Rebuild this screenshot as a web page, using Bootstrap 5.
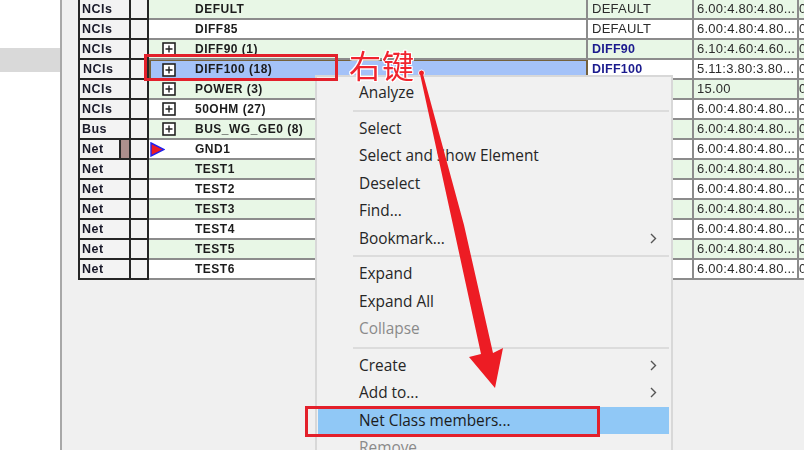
<!DOCTYPE html>
<html lang="en">
<head>
<meta charset="utf-8">
<title>Net classes</title>
<link href="https://cdn.jsdelivr.net/npm/bootstrap@5.3.0/dist/css/bootstrap.min.css" rel="stylesheet">
<style>
html,body{height:100%;}
body{background:#f0f0f0;overflow:hidden;font-family:"Liberation Sans",Arial,sans-serif;}
.stage{position:relative;width:804px;height:450px;overflow:hidden;filter:blur(.35px);}
.side-pane{width:60px;height:100%;background:#fff;border-right:2px solid #a8a8a8;box-sizing:content-box;padding-top:48px;}
.side-band{height:24px;background:#d9d9d9;}
.gutter-strip{width:16px;flex:none;}
.grid-holder{width:726px;flex:none;overflow:hidden;}
.net-grid{table-layout:fixed;width:730px;margin:0;border-collapse:separate;border-spacing:0;--bs-table-bg:transparent;}
.net-grid td{height:20px;padding:0;border:0;border-right:2px solid #8c8c8c;border-bottom:2px solid #8c8c8c;font-size:13px;line-height:18px;color:#2c2c2c;white-space:nowrap;overflow:hidden;letter-spacing:.25px;vertical-align:middle;background:#fff;box-shadow:none;}
.net-grid tr.tint td{background:#e8f7e6;}
.net-grid td.rh{background:#f3f3f3;border-right:2px solid #262626;border-bottom:2px solid #262626;font-weight:700;font-size:12.5px;color:#1a1a2a;padding-left:2px;letter-spacing:.45px;}
.net-grid td.rh-a{border-left:2px solid #262626;}
.net-grid tr td.rh{background:#f3f3f3;}
.net-grid td.tree{font-weight:700;font-size:12px;letter-spacing:.5px;color:#1c1c1c;}
.net-grid td.c4,.net-grid td.c5{padding-left:3px;}
.net-grid td.c4{padding-left:4px;}
.net-grid td.strong{font-weight:700;color:#1b1b8e;font-size:12.5px;}
.net-grid tr.sel td.tree{background:#a4c2f8;border:2px solid #75613c;border-top-width:1px;border-bottom-color:#75613c;line-height:17px;}
.net-grid tr.sel td.rh-a{padding-left:3px;}
.tree-slot{width:46px;flex:none;display:flex;align-items:center;padding-left:13px;}
.sel .tree-slot{width:44px;padding-left:11px;}
.tri-slot{padding-left:1px;}
.expander{display:block;width:14px;height:14px;}
.mark-hdr{display:flex;align-items:stretch;height:100%;}
.hdr-net{flex:1;padding-left:2px;border-right:2px solid #262626;}
.hdr-size{width:8px;background:#ad8f8d;}
td.rh.split{padding-left:0;}
.ctx-menu{display:block;position:absolute;left:315px;top:75px;width:358px;height:390px;margin:0;padding:2px 2px 0 1px;background:#f1f1f1;border:2px solid #d8d8d8;border-radius:0;font-family:"Open Sans","Noto Sans",sans-serif;font-size:15.4px;--bs-dropdown-divider-margin-y:0;}
.ctx-menu .dropdown-item{display:flex;align-items:center;justify-content:space-between;height:27.5px;padding:0 12px 0 41px;color:#262626;background:transparent;font-size:15.4px;line-height:27px;}
.ctx-menu .dropdown-item.active{background:#90c8f6;color:#1c1c1c;}
.ctx-menu .dropdown-item.disabled{color:#8a8a8a;}
.ctx-menu .dropdown-divider{margin:3px 0 3px 35px;border-top:2px solid #dcdcdc;opacity:1;height:0;}
.ctx-menu .dropdown-divider.wide-gap{margin:4px 0 3px 35px;}
.chev{width:7px;height:11px;display:block;}
.note-box{position:absolute;z-index:1001;border:3px solid #e3202b;pointer-events:none;}
.note-a{left:144px;top:54px;width:194px;height:27px;}
.note-b{left:305px;top:406px;width:295px;height:31px;}
.note-text{position:absolute;z-index:1001;left:349px;top:43px;font-family:"Noto Sans CJK SC",sans-serif;font-size:32px;font-weight:400;line-height:42px;color:#f0242e;letter-spacing:1px;text-shadow:1px 0 #fff,-1px 0 #fff,0 1px #fff,0 -1px #fff,1px 1px #fff,-1px -1px #fff,1px -1px #fff,-1px 1px #fff;}
.note-arrow{position:absolute;z-index:1001;left:0;top:0;width:804px;height:450px;pointer-events:none;}
</style>
</head>
<body>
<div class="stage d-flex">
  <div class="side-pane flex-none"><div class="side-band"></div></div>
  <div class="gutter-strip"></div>
  <div class="grid-holder">
    <table class="table net-grid">
      <colgroup><col style="width:53px"><col style="width:18px"><col style="width:439px"><col style="width:106px"><col style="width:105px"><col style="width:9px"></colgroup>
      <tbody>
        <tr class="tint"><td class="rh rh-a">NCIs</td><td class="rh"></td><td class="tree"><div class="d-flex"><span class="tree-slot"></span>DEFULT</div></td><td class="c4">DEFAULT</td><td class="c5">6.00:4.80:4.80...</td><td>0</td></tr>
        <tr><td class="rh rh-a">NCIs</td><td class="rh"></td><td class="tree"><div class="d-flex"><span class="tree-slot"></span>DIFF85</div></td><td class="c4">DEFAULT</td><td class="c5">6.00:4.80:4.80...</td><td>0</td></tr>
        <tr class="tint"><td class="rh rh-a">NCIs</td><td class="rh"></td><td class="tree"><div class="d-flex"><span class="tree-slot"><svg class="expander" viewBox="0 0 14 14"><rect x="1" y="1" width="12" height="12" fill="#fff" stroke="#222" stroke-width="1.6"/><path d="M3.5 7h7M7 3.5v7" stroke="#222" stroke-width="1.4"/></svg></span>DIFF90 (1)</div></td><td class="c4 strong">DIFF90</td><td class="c5">6.10:4.60:4.60...</td><td>0</td></tr>
        <tr class="sel"><td class="rh rh-a">NCIs</td><td class="rh"></td><td class="tree"><div class="d-flex"><span class="tree-slot"><svg class="expander" viewBox="0 0 14 14"><rect x="1" y="1" width="12" height="12" fill="#fff" stroke="#222" stroke-width="1.6"/><path d="M3.5 7h7M7 3.5v7" stroke="#222" stroke-width="1.4"/></svg></span>DIFF100 (18)</div></td><td class="c4 strong">DIFF100</td><td class="c5">5.11:3.80:3.80...</td><td>0</td></tr>
        <tr class="tint"><td class="rh rh-a">NCIs</td><td class="rh"></td><td class="tree"><div class="d-flex"><span class="tree-slot"><svg class="expander" viewBox="0 0 14 14"><rect x="1" y="1" width="12" height="12" fill="#fff" stroke="#222" stroke-width="1.6"/><path d="M3.5 7h7M7 3.5v7" stroke="#222" stroke-width="1.4"/></svg></span>POWER (3)</div></td><td class="c4"></td><td class="c5">15.00</td><td>0</td></tr>
        <tr><td class="rh rh-a">NCIs</td><td class="rh"></td><td class="tree"><div class="d-flex"><span class="tree-slot"><svg class="expander" viewBox="0 0 14 14"><rect x="1" y="1" width="12" height="12" fill="#fff" stroke="#222" stroke-width="1.6"/><path d="M3.5 7h7M7 3.5v7" stroke="#222" stroke-width="1.4"/></svg></span>50OHM (27)</div></td><td class="c4"></td><td class="c5">6.00:4.80:4.80...</td><td>0</td></tr>
        <tr class="tint"><td class="rh rh-a">Bus</td><td class="rh"></td><td class="tree"><div class="d-flex"><span class="tree-slot"><svg class="expander" viewBox="0 0 14 14"><rect x="1" y="1" width="12" height="12" fill="#fff" stroke="#222" stroke-width="1.6"/><path d="M3.5 7h7M7 3.5v7" stroke="#222" stroke-width="1.4"/></svg></span>BUS_WG_GE0 (8)</div></td><td class="c4"></td><td class="c5">6.00:4.80:4.80...</td><td>0</td></tr>
        <tr><td class="rh rh-a split"><div class="mark-hdr"><span class="hdr-net">Net</span><span class="hdr-size"></span></div></td><td class="rh"></td><td class="tree"><div class="d-flex"><span class="tree-slot tri-slot"><svg width="15" height="15" viewBox="0 0 15 15"><path d="M1 1l13 6.5L1 14z" fill="#ed1c24" stroke="#2222ee" stroke-width="1.4"/></svg></span>GND1</div></td><td class="c4"></td><td class="c5">6.00:4.80:4.80...</td><td>0</td></tr>
        <tr class="tint"><td class="rh rh-a">Net</td><td class="rh"></td><td class="tree"><div class="d-flex"><span class="tree-slot"></span>TEST1</div></td><td class="c4"></td><td class="c5">6.00:4.80:4.80...</td><td>0</td></tr>
        <tr><td class="rh rh-a">Net</td><td class="rh"></td><td class="tree"><div class="d-flex"><span class="tree-slot"></span>TEST2</div></td><td class="c4"></td><td class="c5">6.00:4.80:4.80...</td><td>0</td></tr>
        <tr class="tint"><td class="rh rh-a">Net</td><td class="rh"></td><td class="tree"><div class="d-flex"><span class="tree-slot"></span>TEST3</div></td><td class="c4"></td><td class="c5">6.00:4.80:4.80...</td><td>0</td></tr>
        <tr><td class="rh rh-a">Net</td><td class="rh"></td><td class="tree"><div class="d-flex"><span class="tree-slot"></span>TEST4</div></td><td class="c4"></td><td class="c5">6.00:4.80:4.80...</td><td>0</td></tr>
        <tr class="tint"><td class="rh rh-a">Net</td><td class="rh"></td><td class="tree"><div class="d-flex"><span class="tree-slot"></span>TEST5</div></td><td class="c4"></td><td class="c5">6.00:4.80:4.80...</td><td>0</td></tr>
        <tr><td class="rh rh-a">Net</td><td class="rh"></td><td class="tree"><div class="d-flex"><span class="tree-slot"></span>TEST6</div></td><td class="c4"></td><td class="c5">6.00:4.80:4.80...</td><td>0</td></tr>
      </tbody>
    </table>
  </div>

  <div class="dropdown-menu ctx-menu">
    <a class="dropdown-item">Analyze</a>
    <div class="dropdown-divider"></div>
    <a class="dropdown-item">Select</a>
    <a class="dropdown-item">Select and Show Element</a>
    <a class="dropdown-item">Deselect</a>
    <a class="dropdown-item">Find...</a>
    <a class="dropdown-item">Bookmark...<svg class="chev" viewBox="0 0 7 11"><path d="M1 1l4.5 4.5L1 10" fill="none" stroke="#555" stroke-width="1.4"/></svg></a>
    <div class="dropdown-divider"></div>
    <a class="dropdown-item">Expand</a>
    <a class="dropdown-item">Expand All</a>
    <a class="dropdown-item disabled">Collapse</a>
    <div class="dropdown-divider wide-gap"></div>
    <a class="dropdown-item">Create<svg class="chev" viewBox="0 0 7 11"><path d="M1 1l4.5 4.5L1 10" fill="none" stroke="#555" stroke-width="1.4"/></svg></a>
    <a class="dropdown-item">Add to...<svg class="chev" viewBox="0 0 7 11"><path d="M1 1l4.5 4.5L1 10" fill="none" stroke="#555" stroke-width="1.4"/></svg></a>
    <a class="dropdown-item active">Net Class members...</a>
    <a class="dropdown-item disabled">Remove</a>
  </div>

  <div class="note-box note-a"></div>
  <div class="note-box note-b"></div>
  <div class="note-text">右键</div>
  <svg class="note-arrow" viewBox="0 0 804 450"><circle cx="421.5" cy="73" r="3" fill="#ed1c24" stroke="#fff" stroke-width="1"/><path d="M420 74L423 74L464 225L493 353L503 348L495 388L469 357L481 354L453 225Z" fill="#ed1c24"/></svg>
</div>
<script src="https://cdn.jsdelivr.net/npm/bootstrap@5.3.0/dist/js/bootstrap.bundle.min.js"></script>
</body>
</html>
